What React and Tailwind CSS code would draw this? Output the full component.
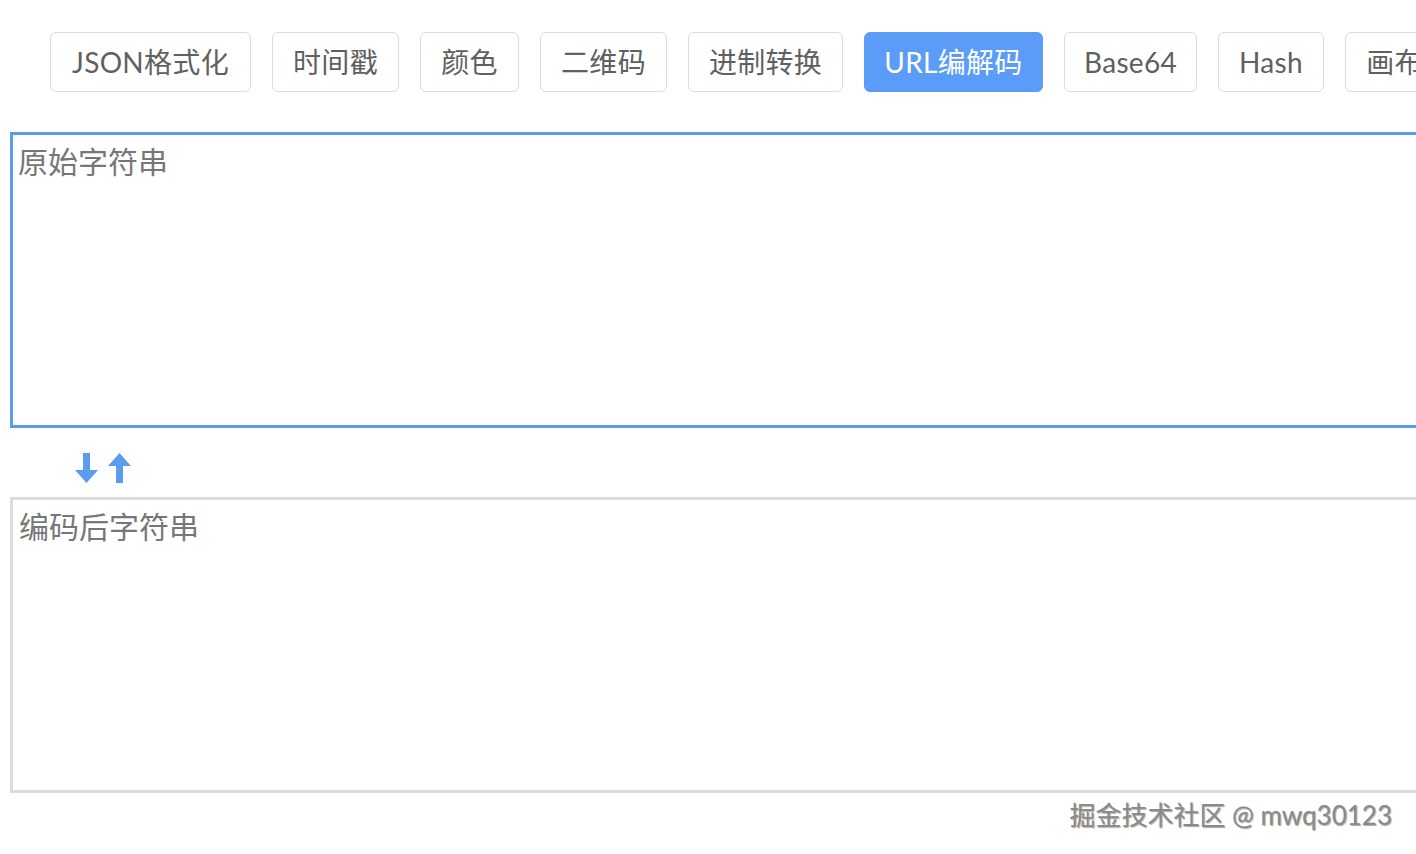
import React from "react";

const tabs = [
  { t: "JSON格式化", w: "w-[201px]" },
  { t: "时间戳", w: "w-[127px]" },
  { t: "颜色", w: "w-[99px]" },
  { t: "二维码", w: "w-[127px]" },
  { t: "进制转换", w: "w-[155px]" },
  { t: "URL编解码", w: "w-[179px]" },
  { t: "Base64", w: "w-[133px]" },
  { t: "Hash", w: "w-[106px]" },
  { t: "画布", w: "w-[99px]" },
];

export default function App() {
  return (
    <div
      className="relative w-full h-[854px] overflow-hidden bg-white"
      style={{ fontFamily: '"Lato", "Noto Sans CJK SC", sans-serif' }}
    >
      <div className="flex flex-nowrap gap-[21px] pl-[50px] pt-[32px]">
        {tabs.map(({ t, w }) => {
          const active = t === "URL编解码";
          return (
            <button
              key={t}
              className={
                active
                  ? `shrink-0 ${w} h-[60px] rounded-[6px] border border-[#5a9cf8] bg-[#5a9cf8] text-white text-[28px] leading-none tracking-[0.3px]`
                  : `shrink-0 ${w} h-[60px] rounded-[6px] border-[1.5px] border-[#dcdcdc] bg-white text-[#606060] text-[28px] leading-none tracking-[0.3px]`
              }
            >
              {t}
            </button>
          );
        })}
      </div>

      <div className="pl-[10px] pt-[40px] w-[1500px]">
        <textarea
          className="block w-full h-[296px] border-[3px] border-[#5a9cf0] outline-none resize-none px-[5px] pt-[7px] text-[30px] leading-[1.3] placeholder:text-[#777]"
          placeholder="原始字符串"
        />
        <div className="flex items-center gap-[10px] h-[69px] pl-[65px] pt-[10px]">
          <svg width="23" height="30" viewBox="0 0 23 30">
            <path d="M8 0h7v17h8L11.5 30 0 17h8z" fill="#5a9cf0" />
          </svg>
          <svg width="23" height="30" viewBox="0 0 23 30">
            <path d="M8 30h7V13h8L11.5 0 0 13h8z" fill="#5a9cf0" />
          </svg>
        </div>
        <textarea
          className="block w-full h-[296px] border-[3px] border-[#dcdcdc] outline-none resize-none px-[6px] pt-[7px] text-[30px] leading-[1.3] placeholder:text-[#777]"
          placeholder="编码后字符串"
        />
      </div>

      <div
        className="absolute right-[24px] top-[796px] text-[26px] text-[#8a8a8a]"
        style={{ textShadow: "1px 1px 1px rgba(0,0,0,0.35), -1px -1px 0 #fff" }}
      >
        掘金技术社区 @ mwq30123
      </div>
    </div>
  );
}
